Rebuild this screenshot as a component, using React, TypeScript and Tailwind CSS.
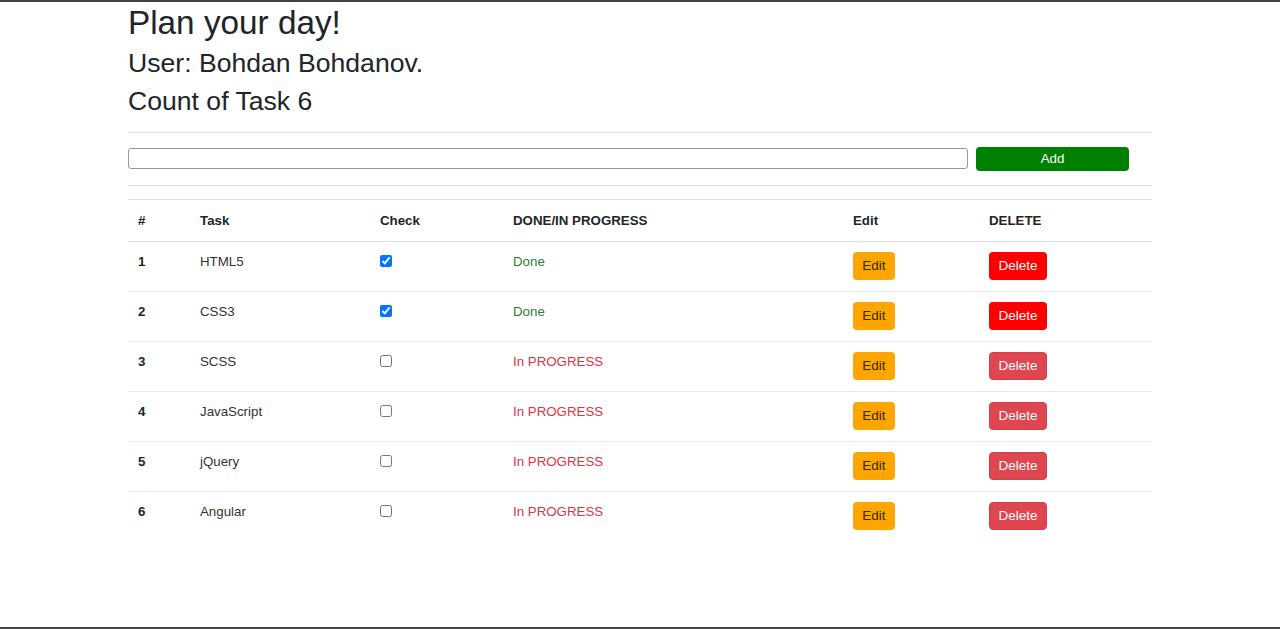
import React from 'react';

type Task = {
  id: number;
  name: string;
  done: boolean;
};

const tasks: Task[] = [
  { id: 1, name: 'HTML5', done: true },
  { id: 2, name: 'CSS3', done: true },
  { id: 3, name: 'SCSS', done: false },
  { id: 4, name: 'JavaScript', done: false },
  { id: 5, name: 'jQuery', done: false },
  { id: 6, name: 'Angular', done: false },
];

export default function App() {
  return (
    <div className="h-[629px] border-t-2 border-b-2 border-[#444] bg-white font-['Liberation_Sans',Arial,sans-serif] text-[#212529] overflow-hidden">
      <div className="w-[1024px] ml-[128px]">
        <h1 className="text-[33.3px] leading-[1.2] mt-[1px]">Plan your day!</h1>
        <h3 className="text-[26.6px] leading-[1.2] mt-[5px]">User: Bohdan Bohdanov.</h3>
        <h3 className="text-[26.6px] leading-[1.2] mt-[6px]">Count of Task {tasks.length}</h3>

        <hr className="mt-[14px] border-t border-[#ddd]" />

        <div className="flex items-center mt-[14px]">
          <input
            className="flex-1 h-[21px] border border-[#999] rounded-[3px] px-2 text-[13px] outline-none"
            type="text"
          />
          <button className="ml-2 mr-[23px] w-[153px] h-[24px] bg-[#008000] text-white text-[13.3px] rounded-[4px]">
            Add
          </button>
        </div>

        <hr className="mt-[14px] border-t border-[#ddd]" />

        <table className="mt-[13px] w-full text-[13.3px] leading-[19px] border-collapse table-fixed">
          <colgroup>
            <col className="w-[62px]" />
            <col className="w-[180px]" />
            <col className="w-[133px]" />
            <col className="w-[340px]" />
            <col className="w-[136px]" />
            <col className="w-[173px]" />
          </colgroup>
          <thead>
            <tr className="border-t border-b border-[#dee2e6] text-left">
              <th className="px-[10px] py-[11px] font-bold">#</th>
              <th className="px-[10px] py-[11px] font-bold">Task</th>
              <th className="px-[10px] py-[11px] font-bold">Check</th>
              <th className="px-[10px] py-[11px] font-bold">DONE/IN PROGRESS</th>
              <th className="px-[10px] py-[11px] font-bold">Edit</th>
              <th className="px-[10px] py-[11px] font-bold">DELETE</th>
            </tr>
          </thead>
          <tbody>
            {tasks.map((t, i) => (
              <tr
                key={t.id}
                className={i < tasks.length - 1 ? 'border-b border-[#e9ecef]' : ''}
              >
                <td className="px-[10px] pt-[10px] pb-[11px] align-top font-bold">{t.id}</td>
                <td className="px-[10px] pt-[10px] pb-[11px] align-top text-[#333]">{t.name}</td>
                <td className="px-[10px] pt-[10px] pb-[11px] align-top">
                  <div className="h-[19px] flex items-center">
                    <input
                      type="checkbox"
                      className="w-[12px] h-[12px] m-0"
                      defaultChecked={t.done}
                    />
                  </div>
                </td>
                <td
                  className={`px-[10px] pt-[10px] pb-[11px] align-top ${
                    t.done ? 'text-[#2e7d32]' : 'text-[#dc3545]'
                  }`}
                >
                  {t.done ? 'Done' : 'In PROGRESS'}
                </td>
                <td className="px-[10px] pt-[10px] pb-[11px] align-top">
                  <button className="block w-[42px] h-[28px] bg-[#ffa500] text-[#3a2600] rounded-[4px] text-[13.5px]">
                    Edit
                  </button>
                </td>
                <td className="px-[10px] pt-[10px] pb-[11px] align-top">
                  <button
                    className={`block w-[58px] h-[28px] rounded-[4px] text-white text-[13.5px] ${
                      t.done ? 'bg-[#ff0000]' : 'bg-[#df4650] border border-[#d0404a]'
                    }`}
                  >
                    Delete
                  </button>
                </td>
              </tr>
            ))}
          </tbody>
        </table>
      </div>
    </div>
  );
}
